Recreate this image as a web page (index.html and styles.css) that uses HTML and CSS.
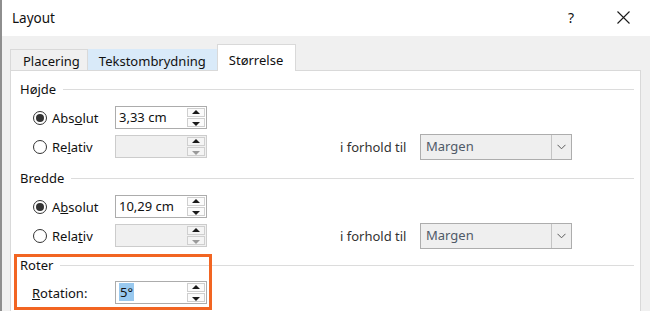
FILE: index.html
```html
<!DOCTYPE html>
<html lang="da">
<head>
<meta charset="utf-8">
<title>Layout</title>
<link rel="stylesheet" href="styles.css">
</head>
<body>
<div class="win">
  <div class="titlebar">
    <span class="title">Layout</span>
    <span class="help">?</span>
    <span class="close"><svg width="13" height="13" viewBox="0 0 13 13"><path d="M0.5 0.5 L12.5 12.5 M12.5 0.5 L0.5 12.5" stroke="#1a1a1a" stroke-width="1.1" fill="none"/></svg></span>
  </div>
  <div class="client">
    <div class="tabs">
      <div class="tab first-tab">Placering</div>
      <div class="tab hover">Tekstombrydning</div>
      <div class="tab sel">Størrelse</div>
    </div>
    <div class="panel">
      <div class="group"><span>Højde</span></div>
      <div class="row first">
        <label class="radio"><span class="dot on"></span><span>Abs<u>o</u>lut</span></label>
        <div class="spin"><span class="val">3,33 cm</span><span class="btns"><span class="b up"></span><span class="b down"></span></span></div>
      </div>
      <div class="row">
        <label class="radio"><span class="dot"></span><span>Re<u>l</u>ativ</span></label>
        <div class="spin off"><span class="val"></span><span class="btns"><span class="b up"></span><span class="b down"></span></span></div>
        <span class="spacer"></span>
        <span class="rel">i forhold til</span>
        <div class="dd"><span class="txt">Margen</span><span class="arr"><svg width="9" height="6" viewBox="0 0 9 6"><path d="M0.5 0.8 L4.5 4.8 L8.5 0.8" stroke="#5a5a5a" stroke-width="1" fill="none"/></svg></span></div>
      </div>
      <div class="group g2"><span>Bredde</span></div>
      <div class="row first">
        <label class="radio"><span class="dot on"></span><span>A<u>b</u>solut</span></label>
        <div class="spin"><span class="val">10,29 cm</span><span class="btns"><span class="b up"></span><span class="b down"></span></span></div>
      </div>
      <div class="row">
        <label class="radio"><span class="dot"></span><span>Rela<u>t</u>iv</span></label>
        <div class="spin off"><span class="val"></span><span class="btns"><span class="b up"></span><span class="b down"></span></span></div>
        <span class="spacer"></span>
        <span class="rel">i forhold til</span>
        <div class="dd"><span class="txt">Margen</span><span class="arr"><svg width="9" height="6" viewBox="0 0 9 6"><path d="M0.5 0.8 L4.5 4.8 L8.5 0.8" stroke="#5a5a5a" stroke-width="1" fill="none"/></svg></span></div>
      </div>
      <div class="group g3"><span>Roter</span></div>
      <div class="row rot">
        <span class="lbl"><u>R</u>otation:</span>
        <div class="spin"><span class="val"><span class="selt">5°</span></span><span class="btns"><span class="b up"></span><span class="b down"></span></span></div>
      </div>
      <div class="highlight"></div>
    </div>
  </div>
</div>
</body>
</html>
```

FILE: styles.css
```css
html, body {
  margin: 0;
  padding: 0;
}
body {
  width: 650px;
  height: 311px;
  overflow: hidden;
  background: #f0f0f0;
  font-family: "Noto Sans", "Open Sans", sans-serif;
  font-size: 13px;
  color: #111111;
}
.win {
  border-left: 2px solid #8e8e8e;
  height: 311px;
  box-sizing: border-box;
  overflow: hidden;
}
.titlebar {
  height: 36px;
  background: #ffffff;
  display: flex;
  align-items: center;
  padding-left: 10px;
  box-sizing: border-box;
}
.title {
  font-size: 13.5px;
  flex: 1;
  margin-top: -1px;
}
.help {
  font-size: 14px;
  margin-right: 43px;
  margin-top: -2px;
}
.close {
  display: flex;
  align-items: center;
  margin-right: 20px;
  margin-top: -1px;
}
.client {
  padding: 8px 9px 0 8px;
}
.tabs {
  display: flex;
  align-items: flex-end;
  height: 26px;
  position: relative;
  z-index: 1;
}
.tab {
  height: 21px;
  box-sizing: border-box;
  padding: 2px 12px 0 12px;
  border: 1px solid #d9d9d9;
  border-bottom: none;
  background: #f0f0f0;
  line-height: 18px;
}
.tab.first-tab {
  padding-right: 7px;
}
.tab.hover {
  background: #d9eaf9;
  border-color: #d9eaf9;
  padding: 2px 10px 0 10px;
}
.tab.sel {
  height: 27px;
  margin-bottom: -1px;
  background: #ffffff;
  border-color: #d9d9d9;
  padding-top: 6px;
  padding-left: 11px;
  padding-right: 12px;
}
.panel {
  position: relative;
  background: #ffffff;
  border: 1px solid #d9d9d9;
  border-bottom: none;
  height: 241px;
  padding: 8px 6px 0 9px;
  box-sizing: border-box;
}
.group {
  display: flex;
  align-items: center;
  gap: 7px;
  height: 20px;
}
.group::after {
  content: "";
  flex: 1;
  height: 1px;
  background: #dcdcdc;
  margin-top: 1px;
}
.g2 { margin-top: 7px; }
.g3 { margin-top: 5px; }
.row {
  display: grid;
  grid-template-columns: 82px 92px 133px 80px 152px;
  align-items: center;
  height: 29px;
  padding-left: 13px;
}
.row.first { margin-top: 4px; }
.radio {
  display: flex;
  align-items: center;
  gap: 5px;
}
.dot {
  width: 14px;
  height: 14px;
  box-sizing: border-box;
  border: 1px solid #333333;
  border-radius: 50%;
  display: flex;
  align-items: center;
  justify-content: center;
}
.dot.on::before {
  content: "";
  width: 8px;
  height: 8px;
  border-radius: 50%;
  background: #333333;
}
.spin {
  height: 23px;
  box-sizing: border-box;
  border: 1px solid #acacac;
  background: #ffffff;
  display: flex;
}
.spin.off {
  background: #f0f0f0;
  border-color: #cccccc;
}
.val {
  flex: 1;
  padding-left: 3px;
  line-height: 20px;
}
.btns {
  width: 19px;
  display: flex;
  flex-direction: column;
  padding: 1px 1px 1px 0;
  box-sizing: border-box;
  gap: 1px;
}
.b {
  flex: 1;
  border: 1px solid #cfcfcf;
  background: #fbfbfb;
  position: relative;
}
.b::before {
  content: "";
  position: absolute;
  left: 50%;
  top: 50%;
  margin-left: -4px;
  border-left: 4px solid transparent;
  border-right: 4px solid transparent;
}
.b.up::before {
  margin-top: -3px;
  border-bottom: 4px solid #1a1a1a;
}
.b.down::before {
  margin-top: -1px;
  border-top: 4px solid #1a1a1a;
}
.off .b.down::before {
  border-top-color: #9a9a9a;
}
.off .b {
  background: #f4f4f4;
}
.rel {
  color: #333333;
}
.dd {
  height: 26px;
  box-sizing: border-box;
  border: 1px solid #adadad;
  background: #efefef;
  display: flex;
}
.dd .txt {
  flex: 1;
  padding-left: 5px;
  line-height: 23px;
  color: #505a68;
}
.dd .arr {
  width: 19px;
  border-left: 1px solid #c4c4c4;
  display: flex;
  align-items: center;
  justify-content: center;
}
.rot {
  grid-template-columns: 83px 92px;
  padding-left: 12px;
  margin-top: 3px;
}
.selt {
  background: #99c9ef;
  padding: 0 1px;
}
.highlight {
  position: absolute;
  left: 3px;
  top: 183px;
  width: 198px;
  height: 56px;
  box-sizing: border-box;
  border: 3px solid #f26522;
}
```
